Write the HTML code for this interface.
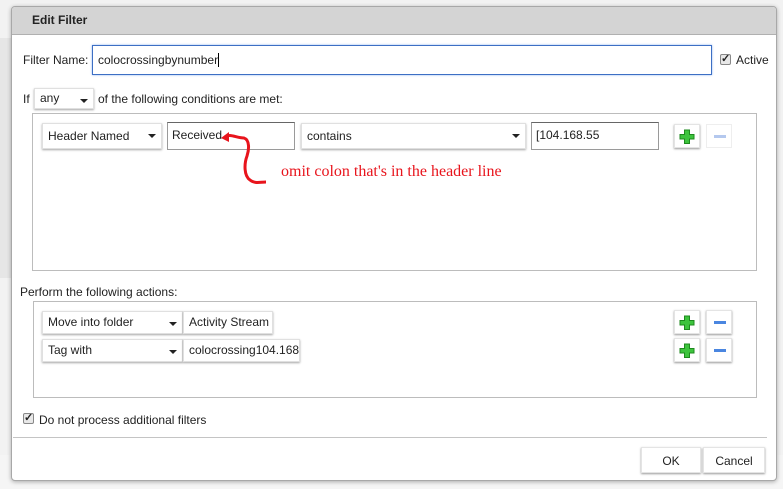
<!DOCTYPE html>
<html><head><style>
*{box-sizing:border-box}
body{margin:0;width:783px;height:489px;background:#f2f2f2;position:relative;overflow:hidden;font-family:"Liberation Sans",sans-serif;font-size:12px;color:#222}
.a{position:absolute}
.dlg{left:11px;top:6px;width:766px;height:475px;background:#fff;border:1px solid #a8a8a8;border-radius:4px;box-shadow:0 1px 4px rgba(0,0,0,.3);overflow:hidden}
.hdr{left:0;top:0;width:100%;height:28px;background:#d4d4d4;border-bottom:1px solid #b0b0b0;font-weight:bold;font-size:12px;padding:6px 0 0 20px}
.sel,.fld{background:#fff;box-shadow:0 1px 2px rgba(0,0,0,.35);border:1px solid #e0e0e0;padding:5px 0 0 5px;line-height:13px;white-space:nowrap}
.sel:after{content:"";position:absolute;right:5px;top:10px;border-left:4px solid transparent;border-right:4px solid transparent;border-top:4px solid #222}
.inp{background:#fff;border:1px solid #9a9a9a;border-top-color:#666;padding:6px 0 0 4px;line-height:13px}
.btn{background:#fff;box-shadow:0 1px 2px rgba(0,0,0,.4);border:1px solid #e4e4e4}
.box{border:1px solid #bcbcbc}
.cb{width:11px;height:11px;border:1px solid #888;background:#e8e8e8;border-radius:2px;font-size:11px;line-height:9px;text-align:center;font-weight:bold}
</style></head><body>
<div class="a" style="left:0;top:38px;width:11px;height:240px;background:#e6e6e6"></div>
<div class="a" style="left:0;top:455px;width:783px;height:34px;background:#f5f5f5"></div>
<div class="a dlg">
 <div class="a hdr">Edit Filter</div>
</div>
<div class="a" style="left:23px;top:53px">Filter Name:</div>
<div class="a" style="left:92px;top:45px;width:620px;height:30px;border:1px solid #3d6fc4;box-shadow:0 0 2px #8ab0f0;padding:7px 5px;line-height:14px">colocrossingbynumber<span style="border-left:1px solid #000"></span></div>
<div class="a cb" style="left:720px;top:54px">✓</div>
<div class="a" style="left:736px;top:53px">Active</div>
<div class="a" style="left:23px;top:92px">If</div>
<div class="a sel" style="left:34px;top:88px;width:60px;height:21px;padding-top:3px">any</div>
<div class="a" style="left:98px;top:92px">of the following conditions are met:</div>
<div class="a box" style="left:32px;top:113px;width:725px;height:158px"></div>
<div class="a sel" style="left:42px;top:123px;width:120px;height:26px;padding-top:6px">Header Named</div>
<div class="a inp" style="left:167px;top:122px;width:128px;height:28px">Received</div>
<div class="a sel" style="left:301px;top:123px;width:225px;height:26px;padding-top:6px">contains</div>
<div class="a inp" style="left:531px;top:122px;width:128px;height:28px">[104.168.55</div>
<div class="a btn" style="left:674px;top:124px;width:26px;height:24px"><svg width="24" height="22"><path d="M9.5 5h5v4.5h4.5v4.5h-4.5v4.5h-5v-4.5h-4.5v-4.5h4.5z" fill="#3dc43d" stroke="#1e8a1e"/></svg></div>
<div class="a btn" style="left:706px;top:124px;width:26px;height:24px;box-shadow:none;border-color:#eee"><div class="a" style="left:7px;top:10px;width:12px;height:3px;background:#b4c8ee"></div></div>
<svg class="a" style="left:218px;top:128px" width="60" height="62"><path d="M7 9 C12 5 18 10 26 10 C32 12 31 22 29 28 C26 36 26 48 32 52 C37 56 42 54 48 54" fill="none" stroke="#e8141c" stroke-width="3"/><path d="M3 10 L11 4 L11 14z" fill="#e8141c"/></svg>
<div class="a" style="left:281px;top:163px;font-family:'Liberation Serif',serif;font-size:16px;color:#e8141c">omit colon that's in the header line</div>
<div class="a" style="left:20px;top:285px">Perform the following actions:</div>
<div class="a box" style="left:33px;top:301px;width:724px;height:97px"></div>
<div class="a sel" style="left:42px;top:311px;width:141px;height:23px;padding-top:4px">Move into folder</div>
<div class="a fld" style="left:183px;top:311px;width:90px;height:23px;padding-top:4px">Activity Stream</div>
<div class="a sel" style="left:42px;top:339px;width:141px;height:23px;padding-top:4px">Tag with</div>
<div class="a fld" style="left:183px;top:339px;width:117px;height:23px;padding-top:4px">colocrossing104.168</div>
<div class="a btn" style="left:674px;top:310px;width:26px;height:24px"><svg width="24" height="22"><path d="M9.5 5h5v4.5h4.5v4.5h-4.5v4.5h-5v-4.5h-4.5v-4.5h4.5z" fill="#3dc43d" stroke="#1e8a1e"/></svg></div>
<div class="a btn" style="left:706px;top:310px;width:26px;height:24px"><div class="a" style="left:7px;top:10px;width:12px;height:3px;background:#4a86e0"></div></div>
<div class="a btn" style="left:674px;top:338px;width:26px;height:24px"><svg width="24" height="22"><path d="M9.5 5h5v4.5h4.5v4.5h-4.5v4.5h-5v-4.5h-4.5v-4.5h4.5z" fill="#3dc43d" stroke="#1e8a1e"/></svg></div>
<div class="a btn" style="left:706px;top:338px;width:26px;height:24px"><div class="a" style="left:7px;top:10px;width:12px;height:3px;background:#4a86e0"></div></div>
<div class="a cb" style="left:23px;top:413px">✓</div>
<div class="a" style="left:39px;top:413px">Do not process additional filters</div>
<div class="a" style="left:13px;top:437px;width:754px;height:1px;background:#c4c4c4"></div>
<div class="a btn" style="left:641px;top:447px;width:60px;height:26px;text-align:center;padding-top:6px">OK</div>
<div class="a btn" style="left:703px;top:447px;width:62px;height:26px;text-align:center;padding-top:6px">Cancel</div>
</body></html>
